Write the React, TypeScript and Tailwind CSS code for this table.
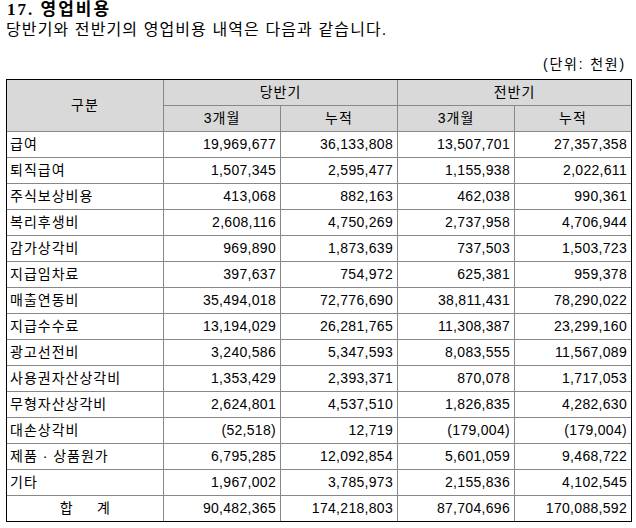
import React from 'react';

type Row = { label: string; values: string[] };

const rows: Row[] = [
  { label: '급여', values: ['19,969,677', '36,133,808', '13,507,701', '27,357,358'] },
  { label: '퇴직급여', values: ['1,507,345', '2,595,477', '1,155,938', '2,022,611'] },
  { label: '주식보상비용', values: ['413,068', '882,163', '462,038', '990,361'] },
  { label: '복리후생비', values: ['2,608,116', '4,750,269', '2,737,958', '4,706,944'] },
  { label: '감가상각비', values: ['969,890', '1,873,639', '737,503', '1,503,723'] },
  { label: '지급임차료', values: ['397,637', '754,972', '625,381', '959,378'] },
  { label: '매출연동비', values: ['35,494,018', '72,776,690', '38,811,431', '78,290,022'] },
  { label: '지급수수료', values: ['13,194,029', '26,281,765', '11,308,387', '23,299,160'] },
  { label: '광고선전비', values: ['3,240,586', '5,347,593', '8,083,555', '11,567,089'] },
  { label: '사용권자산상각비', values: ['1,353,429', '2,393,371', '870,078', '1,717,053'] },
  { label: '무형자산상각비', values: ['2,624,801', '4,537,510', '1,826,835', '4,282,630'] },
  { label: '대손상각비', values: ['(52,518)', '12,719', '(179,004)', '(179,004)'] },
  { label: '제품 · 상품원가', values: ['6,795,285', '12,092,854', '5,601,059', '9,468,722'] },
  { label: '기타', values: ['1,967,002', '3,785,973', '2,155,836', '4,102,545'] },
];

const total = ['90,482,365', '174,218,803', '87,704,696', '170,088,592'];

const font = "font-['Liberation_Sans','Noto_Sans_CJK_KR',sans-serif]";

export default function App() {
  return (
    <div className={`w-[636px] h-[528px] bg-white text-black px-[6px] ${font}`}>
      <div className="font-['Liberation_Serif','Noto_Sans_CJK_KR',serif] font-bold text-[17px] leading-[20px] pl-[1px] tracking-[2px]">
        17. 영업비용
      </div>
      <div className="text-[16px] leading-[20px] tracking-[1.1px]">
        당반기와 전반기의 영업비용 내역은 다음과 같습니다.
      </div>
      <div className="mt-[14px] mb-[5px] h-[20px] text-right text-[14px] leading-[20px] pr-[4px] tracking-[1.8px]">
        (단위: 천원)
      </div>

      <div className="w-[626px] border border-black bg-[#888888]">
        <div className="grid grid-cols-[156px_116px_116px_116px_116px] auto-rows-[25px] gap-px text-[14px] tracking-[0.3px]">
          <div className="row-span-2 bg-[#d9d9d9] flex items-center justify-center tracking-[1px]">구분</div>
          <div className="col-span-2 bg-[#d9d9d9] flex items-center justify-center tracking-[1px]">당반기</div>
          <div className="col-span-2 bg-[#d9d9d9] flex items-center justify-center tracking-[1px]">전반기</div>
          <div className="bg-[#d9d9d9] flex items-center justify-center tracking-[1px]">3개월</div>
          <div className="bg-[#d9d9d9] flex items-center justify-center tracking-[1px]">누적</div>
          <div className="bg-[#d9d9d9] flex items-center justify-center tracking-[1px]">3개월</div>
          <div className="bg-[#d9d9d9] flex items-center justify-center tracking-[1px]">누적</div>

          {rows.map((r) => (
            <React.Fragment key={r.label}>
              <div className="bg-white flex items-center pl-[3px] whitespace-nowrap tracking-[1px]">{r.label}</div>
              {r.values.map((v, i) => (
                <div key={i} className="bg-white flex items-center justify-end pr-[4px]">
                  {v}
                </div>
              ))}
            </React.Fragment>
          ))}

          <div className="bg-white flex items-center justify-center gap-[24px]">
            <span>합</span>
            <span>계</span>
          </div>
          {total.map((v, i) => (
            <div key={i} className="bg-white flex items-center justify-end pr-[4px]">
              {v}
            </div>
          ))}
        </div>
      </div>
    </div>
  );
}
